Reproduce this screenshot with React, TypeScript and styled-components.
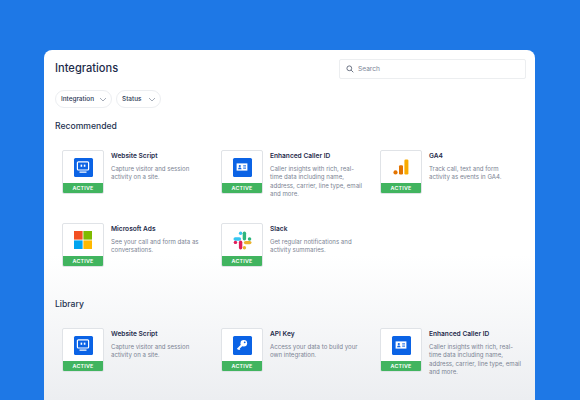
import React from "react";
import styled, { createGlobalStyle } from "styled-components";

const Global = createGlobalStyle`
  html, body { margin: 0; padding: 0; background: #1e78e6; }
  body { width: 580px; height: 400px; overflow: hidden; font-family: Inter, "Liberation Sans", sans-serif; }
`;
const Page = styled.div`
  width: 580px; height: 400px; padding: 50px 45px 0 44px; box-sizing: border-box; overflow: hidden;
`;
const Panel = styled.main`
  height: 350px; box-sizing: border-box; padding: 9px 9px 0 11px; border-radius: 8px 8px 0 0;
  background: linear-gradient(180deg, #fff 0, #fff 205px, #eceef1 350px);
`;
const Header = styled.header`
  display: flex; justify-content: space-between; align-items: center; height: 20px;
`;
const Title = styled.h1`
  margin: 0 0 2px; font-size: 11.1px; line-height: 18px; font-weight: 500; color: #1d2b4a;
`;
const SearchBox = styled.div`
  width: 187px; height: 20px; box-sizing: border-box; display: flex; align-items: center; gap: 4px;
  padding-left: 6px; border: 1px solid #eceef0; border-radius: 2px; background: #fff;
`;
const SearchText = styled.span`
  font-size: 6.6px; color: #7d8698;
`;
const Filters = styled.div`
  display: flex; gap: 4px; margin-top: 11px;
`;
const Pill = styled.button<{ $w: number }>`
  width: ${(p) => p.$w}px; height: 18px; padding: 0 0 0 5px; box-sizing: border-box;
  display: flex; align-items: center; justify-content: space-between;
  border: 1px solid #eceef1; border-radius: 9px; background: #fff;
  font: 500 6.4px Inter, sans-serif; color: #2a3753;
  svg { margin-right: 4px; }
`;
const Section = styled.h2<{ $top: number }>`
  margin: ${(p) => p.$top}px 0 0; font-size: 8.6px; line-height: 12px; font-weight: 500; color: #24324f;
`;
const Grid = styled.div<{ $top: number }>`
  display: grid; grid-template-columns: repeat(3, 159px); grid-auto-rows: 73px;
  margin: ${(p) => p.$top}px 0 0 7px;
`;
const Item = styled.article`
  display: flex; gap: 7px; align-items: flex-start;
`;
const Tile = styled.div`
  flex: none; width: 42px; height: 44px; box-sizing: border-box; display: flex; flex-direction: column;
  border: 1px solid #e0e3e7; border-radius: 2px; background: #fff; overflow: hidden;
`;
const TileArt = styled.div`
  flex: 1; display: flex; align-items: center; justify-content: center;
`;
const Badge = styled.div`
  height: 10px; background: #41b45f; color: #fff; font-size: 5.4px; line-height: 10px; font-weight: 600;
  text-align: center; letter-spacing: 0.15px;
`;
const Square = styled.div`
  width: 19px; height: 19px; border-radius: 1.5px; background: #0b63e5; display: flex; align-items: center; justify-content: center;
`;
const Body = styled.div`
  width: 100px; padding-top: 2px;
`;
const Name = styled.h3`
  margin: 0; font-size: 6.6px; line-height: 9px; font-weight: 600; color: #1f2c4c; white-space: nowrap;
`;
const Desc = styled.p`
  margin: 4px 0 0; font-size: 6.1px; line-height: 8.45px; color: #7b8393; white-space: pre-line;
`;

const Chevron = () => (
  <svg width="8" height="5" viewBox="0 0 8 5"><path d="M1 1l3 3 3-3" fill="none" stroke="#7d8698" strokeWidth="0.7" /></svg>
);
const Monitor = () => (
  <Square>
    <svg width="14" height="14" viewBox="0 0 14 14">
      <rect x="1.4" y="1.8" width="11.2" height="8.2" rx="1" fill="none" stroke="#fff" strokeWidth="1.2" />
      <rect x="4.6" y="4.6" width="1.6" height="2.2" fill="#fff" />
      <rect x="7.8" y="4.6" width="1.6" height="2.2" fill="#fff" />
      <path d="M3.5 12.2h7" stroke="#fff" strokeWidth="1.2" />
    </svg>
  </Square>
);
const CallerId = () => (
  <Square>
    <svg width="14" height="14" viewBox="0 0 14 14">
      <rect x="1.6" y="3.4" width="10.8" height="7.2" fill="#fff" />
      <circle cx="4.8" cy="6" r="1.1" fill="#0b63e5" />
      <path d="M3 9.2c.2-1.3.9-1.7 1.8-1.7s1.6.4 1.8 1.7z" fill="#0b63e5" />
      <path d="M8.2 5.6h2.8M8.2 7h2.8M8.2 8.4h2.8" stroke="#0b63e5" strokeWidth="0.7" />
    </svg>
  </Square>
);
const Key = () => (
  <Square>
    <svg width="14" height="14" viewBox="0 0 14 14">
      <circle cx="8.8" cy="5.2" r="3.3" fill="#fff" />
      <circle cx="9.7" cy="4.3" r="0.9" fill="#0b63e5" />
      <path d="M7 7L2.6 11.4" stroke="#fff" strokeWidth="2" />
      <path d="M3.6 10.4l1.3 1.3" stroke="#fff" strokeWidth="1.2" />
    </svg>
  </Square>
);
const GA = () => (
  <svg width="16" height="16" viewBox="0 0 16 16">
    <rect x="11.4" y="0.5" width="4" height="15" rx="1.2" fill="#f9ab00" />
    <rect x="6" y="6.3" width="4" height="9.2" rx="1.2" fill="#e37400" />
    <circle cx="2.5" cy="13.4" r="2.1" fill="#e37400" />
  </svg>
);
const MS = () => (
  <svg width="18" height="18" viewBox="0 0 18 18">
    <rect width="8.6" height="8.6" fill="#f25022" />
    <rect x="9.4" width="8.6" height="8.6" fill="#7fba00" />
    <rect y="9.4" width="8.6" height="8.6" fill="#00a4ef" />
    <rect x="9.4" y="9.4" width="8.6" height="8.6" fill="#ffb900" />
  </svg>
);
const Slack = () => (
  <svg width="19" height="19" viewBox="0 0 19 19">
    <g strokeLinecap="round" strokeWidth="3.4" fill="none">
      <path d="M2.2 8h4.2" stroke="#36c5f0" />
      <path d="M7.6 2.2v.1" stroke="#36c5f0" />
      <path d="M11.4 2.2v5.6" stroke="#2eb67d" />
      <path d="M16.6 8h-.1" stroke="#2eb67d" />
      <path d="M12.6 11.6h4.2" stroke="#ecb22e" />
      <path d="M11.4 16.8v-.1" stroke="#ecb22e" />
      <path d="M7.6 11.2v5.6" stroke="#e01e5a" />
      <path d="M2.4 11.4h.1" stroke="#e01e5a" />
    </g>
  </svg>
);

type Row = { name: string; desc: string; art: React.ReactNode };
const site: Row = { name: "Website Script", desc: "Capture visitor and session\nactivity on a site.", art: <Monitor /> };
const caller: Row = { name: "Enhanced Caller ID", desc: "Caller insights with rich, real-\ntime data including name,\naddress, carrier, line type, email\nand more.", art: <CallerId /> };
const recommended: Row[] = [
  site,
  caller,
  { name: "GA4", desc: "Track call, text and form\nactivity as events in GA4.", art: <GA /> },
  { name: "Microsoft Ads", desc: "See your call and form data as\nconversations.", art: <MS /> },
  { name: "Slack", desc: "Get regular notifications and\nactivity summaries.", art: <Slack /> },
];
const library: Row[] = [
  site,
  { name: "API Key", desc: "Access your data to build your\nown integration.", art: <Key /> },
  caller,
];

const Cards = ({ rows, top }: { rows: Row[]; top: number }) => (
  <Grid $top={top}>
    {rows.map((r) => (
      <Item key={r.name}>
        <Tile>
          <TileArt>{r.art}</TileArt>
          <Badge>ACTIVE</Badge>
        </Tile>
        <Body>
          <Name>{r.name}</Name>
          <Desc>{r.desc}</Desc>
        </Body>
      </Item>
    ))}
  </Grid>
);

export default function App() {
  return (
    <Page>
      <Global />
      <Panel>
        <Header>
          <Title>Integrations</Title>
          <SearchBox>
            <svg width="8" height="8" viewBox="0 0 8 8"><circle cx="3.3" cy="3.3" r="2.4" fill="none" stroke="#5d6678" strokeWidth="0.9" /><path d="M5.1 5.1L7.3 7.3" stroke="#5d6678" strokeWidth="0.9" /></svg>
            <SearchText>Search</SearchText>
          </SearchBox>
        </Header>
        <Filters>
          <Pill $w={57}>Integration<Chevron /></Pill>
          <Pill $w={45}>Status<Chevron /></Pill>
        </Filters>
        <Section $top={12}>Recommended</Section>
        <Cards rows={recommended} top={18} />
        <Section $top={2}>Library</Section>
        <Cards rows={library} top={18} />
      </Panel>
    </Page>
  );
}
